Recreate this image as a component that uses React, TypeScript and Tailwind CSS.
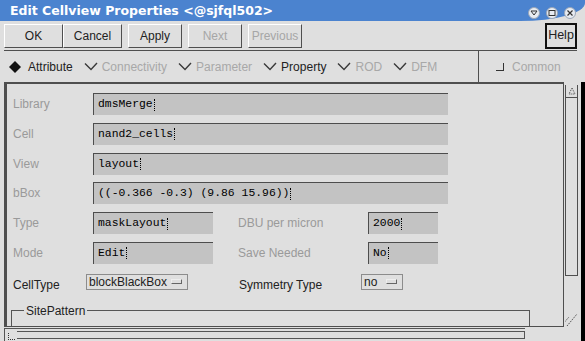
import React from "react";

const sans = "font-['Liberation_Sans',Arial,sans-serif]";
const mono = "font-['Liberation_Mono','Courier_New',monospace]";

const Check = () => (
  <svg width="14" height="9" viewBox="0 0 14 9" className="shrink-0">
    <polyline points="1,1.5 7,7.5 13,1" fill="none" stroke="#3a3a3a" strokeWidth="1.4" />
  </svg>
);

const Cursor = () => <span className="ml-px inline-block h-[12px] w-[2px] border-l border-dotted border-black" />;

const Field = ({ value, w }: { value: string; w: string }) => (
  <div className={`${w} flex h-[22px] items-center border-t border-l border-[#4d4d4d] bg-[#c3c3c3] pl-[4px] ${mono} text-[11.4px] text-black`}>
    {value}
    <Cursor />
  </div>
);

const Label = ({ text, w }: { text: string; w: string }) => <div className={`${w} shrink-0 text-[12px] text-[#9a9a9a]`}>{text}</div>;

const Btn = ({ text, w, disabled }: { text: string; w: string; disabled?: boolean }) => (
  <div
    className={`${w} flex h-[24px] items-center justify-center border border-t-white border-l-white border-r-[#4f4f4f] border-b-[#4f4f4f] text-[12px] ${disabled ? "text-[#a6a6a6]" : "text-[#222]"}`}
  >
    {text}
  </div>
);

const Tab = ({ text, disabled }: { text: string; disabled?: boolean }) => (
  <div className="flex items-center gap-[4px]">
    <Check />
    <span className={disabled ? "text-[#a8a8a8]" : "text-[#222]"}>{text}</span>
  </div>
);

const Combo = ({ text, w }: { text: string; w: string }) => (
  <div className={`${w} flex h-[16px] items-center justify-between border border-[#8c8c8c] pl-[2px] pr-[5px] text-[12px] text-[#222]`}>
    <span>{text}</span>
    <span className="inline-block h-[5px] w-[11px] border border-t-[#eee] border-l-[#eee] border-r-[#666] border-b-[#666]" />
  </div>
);

export default function App() {
  return (
    <div className={`relative flex h-[341px] w-[585px] flex-col overflow-hidden bg-[#dfdfdf] ${sans}`}>
      {/* title bar */}
      <div className="h-[21px] shrink-0 rounded-br-[65px_18px] bg-[#4b83cf] pl-[10px] font-['DejaVu_Sans',sans-serif] text-[12.5px] leading-[21px] font-bold text-white">
        Edit Cellview Properties &lt;@sjfql502&gt;
      </div>
      <div className="absolute top-[7px] right-[9px] flex gap-[6px]">
        {["v", "r", "x"].map((k) => (
          <div key={k} className="flex h-[12px] w-[12px] items-center justify-center rounded-full border border-[#9aa6b8] bg-[#e8ecf2]">
            <svg width="8" height="8" viewBox="0 0 8 8">
              {k === "v" && <polyline points="1,2 4,6 7,2 1,2" fill="none" stroke="#333" strokeWidth="1" />}
              {k === "r" && <rect x="1" y="1.5" width="6" height="5" fill="none" stroke="#333" strokeWidth="1" />}
              {k === "x" && <path d="M1.5 1.5 L6.5 6.5 M6.5 1.5 L1.5 6.5" stroke="#333" strokeWidth="1.2" />}
            </svg>
          </div>
        ))}
      </div>

      {/* buttons */}
      <div className="flex h-[29px] shrink-0 items-center pr-[8px] pl-[4px]">
        <Btn text="OK" w="w-[59px]" />
        <Btn text="Cancel" w="w-[59px]" />
        <div className="w-[6px]" />
        <Btn text="Apply" w="w-[54px]" />
        <div className="w-[6px]" />
        <Btn text="Next" w="w-[54px]" disabled />
        <div className="w-[6px]" />
        <Btn text="Previous" w="w-[54px]" disabled />
        <div className="ml-auto flex h-[26px] w-[32px] items-center justify-center border-2 border-[#111] text-[12.5px] text-[#222]">Help</div>
      </div>
      <div className="ml-[4px] h-px w-[573px] shrink-0 bg-[#4f4f4f]" />

      {/* tabs */}
      <div className="flex h-[31px] shrink-0 items-center text-[12px]">
        <div className="flex flex-1 items-center gap-[11px] pl-[9px]">
          <div className="flex items-center gap-[7px]">
            <svg width="12" height="12" viewBox="0 0 12 12">
              <polygon points="6,0 12,6 6,12 0,6" fill="#111" />
            </svg>
            <span className="text-[#222]">Attribute</span>
          </div>
          <Tab text="Connectivity" disabled />
          <Tab text="Parameter" disabled />
          <Tab text="Property" />
          <Tab text="ROD" disabled />
          <Tab text="DFM" disabled />
        </div>
        <div className="h-full w-px bg-[#4f4f4f]" />
        <div className="flex w-[106px] items-center gap-[8px] pl-[17px]">
          <span className="inline-block h-[8px] w-[8px] border-r border-b border-[#333]" />
          <span className="text-[#a8a8a8]">Common</span>
        </div>
      </div>

      {/* main */}
      <div className="flex min-h-0 flex-1">
        <div className="ml-[4px] flex w-[560px] flex-col">
          <div className="flex h-[245px] flex-col border-t-2 border-r border-b border-l-[3px] border-[#4f4f4f] pt-[9px] pl-[6px]">
            <div className="flex flex-col gap-[7.8px]">
              <div className="flex items-center">
                <Label text="Library" w="w-[80px]" />
                <Field value="dmsMerge" w="w-[355px]" />
              </div>
              <div className="flex items-center">
                <Label text="Cell" w="w-[80px]" />
                <Field value="nand2_cells" w="w-[355px]" />
              </div>
              <div className="flex items-center">
                <Label text="View" w="w-[80px]" />
                <Field value="layout" w="w-[355px]" />
              </div>
              <div className="flex items-center">
                <Label text="bBox" w="w-[80px]" />
                <Field value="((-0.366 -0.3) (9.86 15.96))" w="w-[355px]" />
              </div>
              <div className="flex items-center">
                <Label text="Type" w="w-[80px]" />
                <Field value="maskLayout" w="w-[120px]" />
                <Label text="DBU per micron" w="ml-[25px] w-[130px]" />
                <Field value="2000" w="w-[70px]" />
              </div>
              <div className="flex items-center">
                <Label text="Mode" w="w-[80px]" />
                <Field value="Edit" w="w-[120px]" />
                <Label text="Save Needed" w="ml-[25px] w-[130px]" />
                <Field value="No" w="w-[70px]" />
              </div>
            </div>
            <div className="mt-[10px] flex items-start text-[12px] text-[#222]">
              <div className="mt-[2px] w-[73px]">CellType</div>
              <Combo text="blockBlackBox" w="w-[102px]" />
              <div className="mt-[2px] ml-[51px] w-[122px]">Symmetry Type</div>
              <Combo text="no" w="w-[42px]" />
            </div>
            <fieldset className="mt-[10px] ml-[-2px] h-[24px] w-[519px] border-t border-r border-l border-[#555] pl-[12px]">
              <legend className="px-[2px] text-[12px] leading-[14px] text-[#222]">SitePattern</legend>
            </fieldset>
          </div>
          <div className="mt-[1px] flex h-[14px] w-[521px] border-t border-l border-[#555]">
            <div className="flex w-[12px] items-end justify-center pb-[1px]">
              <span className="inline-block h-[7px] w-[7px] border-b border-l border-dotted border-[#333]" />
            </div>
            <div className="mt-[2px] mb-[2px] flex-1 border-t border-r border-b border-[#555]" />
          </div>
        </div>

        {/* vertical scrollbar */}
        <div className="ml-[1px] flex w-[13px] flex-col">
          <div className="mt-[3px] flex h-[191px] flex-col border-r border-b border-l border-[#4f4f4f]">
            <div className="flex h-[13px] items-center justify-center border-b border-[#4f4f4f]">
              <svg width="8" height="8" viewBox="0 0 8 8">
                <polygon points="4,1 7,7 1,7" fill="none" stroke="#444" strokeWidth="1" strokeDasharray="1 1" />
              </svg>
            </div>
          </div>
          <svg width="13" height="40" viewBox="0 0 13 40" className="mt-[10px]">
            <path d="M2 40 L12 28 M-4 40 L4 31" stroke="#555" strokeWidth="1" strokeDasharray="1.5 1" />
          </svg>
        </div>
        <div className="ml-[3px] w-[4px] bg-black" />
      </div>
    </div>
  );
}
